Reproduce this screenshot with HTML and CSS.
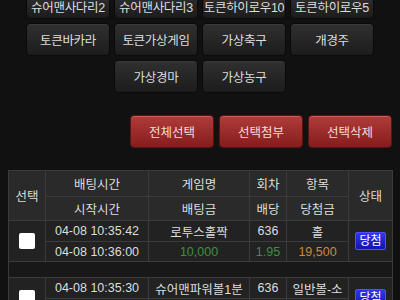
FILE: index.html
```html
<html lang="ko">

<head>
  <meta charset="UTF-8">
  <meta name="viewport" content="width=device-width, initial-scale=1.0">
  <title>betting history</title>
  <link rel="stylesheet" href="styles.css">
</head>

<body>
  <div class="page">
    <div class="games">
      <button class="game first">슈어맨사다리2</button>
      <button class="game first">슈어맨사다리3</button>
      <button class="game first">토큰하이로우10</button>
      <button class="game first">토큰하이로우5</button>
      <button class="game">토큰바카라</button>
      <button class="game">토큰가상게임</button>
      <button class="game">가상축구</button>
      <button class="game">개경주</button>
      <button class="game">가상경마</button>
      <button class="game">가상농구</button>
    </div>

    <div class="actions">
      <button class="action">전체선택</button>
      <button class="action">선택첨부</button>
      <button class="action">선택삭제</button>
    </div>

    <table class="bets">
      <colgroup>
        <col style="width: 37px">
        <col style="width: 103px">
        <col style="width: 101px">
        <col style="width: 37px">
        <col style="width: 62px">
        <col style="width: 44px">
      </colgroup>
      <thead>
        <tr class="head-top">
          <th rowspan="2">선택</th>
          <th>배팅시간</th>
          <th>게임명</th>
          <th>회차</th>
          <th>항목</th>
          <th rowspan="2">상태</th>
        </tr>
        <tr class="head-bottom">
          <th>시작시간</th>
          <th>배팅금</th>
          <th>배당</th>
          <th>당첨금</th>
        </tr>
      </thead>
      <tbody>
        <tr class="row-top">
          <td rowspan="2"><span class="check"></span></td>
          <td>04-08 10:35:42</td>
          <td>로투스홀짝</td>
          <td>636</td>
          <td>홀</td>
          <td rowspan="2"><span class="badge">당첨</span></td>
        </tr>
        <tr class="row-bottom">
          <td>04-08 10:36:00</td>
          <td class="green">10,000</td>
          <td class="green">1.95</td>
          <td class="orange">19,500</td>
        </tr>
        <tr class="spacer">
          <td colspan="6"></td>
        </tr>
        <tr class="row-top">
          <td rowspan="2"><span class="check"></span></td>
          <td>04-08 10:35:30</td>
          <td>슈어맨파워볼1분</td>
          <td>636</td>
          <td>일반볼-소</td>
          <td rowspan="2"><span class="badge">당첨</span></td>
        </tr>
        <tr class="row-bottom">
          <td>04-08 10:36:00</td>
          <td class="green">10,000</td>
          <td class="green">1.95</td>
          <td class="orange">19,500</td>
        </tr>
      </tbody>
    </table>
  </div>
</body>

</html>
```

FILE: styles.css
```css
body {
  margin: 0;
  background: #111;
  font-family: "Liberation Sans", "Noto Sans CJK KR", sans-serif;
  font-size: 12px;
  color: #ddd;
}

.page {
  margin-top: -7px;
}

.games {
  display: flex;
  flex-wrap: wrap;
  justify-content: center;
  gap: 4px;
  width: 348px;
  margin: 0 auto;
}

.game {
  width: 84px;
  height: 33px;
  padding: 0;
  border: 1px solid #0a0a0a;
  border-radius: 4px;
  background: linear-gradient(#303030, #1c1c1c);
  box-shadow: inset 0 1px 0 #3a3a3a;
  color: #ddd;
  font: inherit;
  font-size: 12.5px;
  letter-spacing: -0.3px;
}

.game.first {
  height: 26px;
}

.actions {
  display: flex;
  justify-content: flex-end;
  gap: 5px;
  margin: 22px 8px 0 0;
}

.action {
  width: 84px;
  height: 33px;
  padding: 0;
  border: 1px solid #5a1414;
  border-radius: 4px;
  background: linear-gradient(#b03c3a, #861c1c);
  box-shadow: inset 0 1px 0 #c85a58;
  color: #f2dede;
  font: inherit;
  font-size: 12.5px;
}

.bets {
  margin: 22px 8px 0 8px;
  width: 384px;
  table-layout: fixed;
  border-collapse: collapse;
}

.bets th,
.bets td {
  border: 1px solid #3b3b3b;
  padding: 0;
  text-align: center;
  white-space: nowrap;
  overflow: hidden;
}

.bets th {
  background: #2a2a2a;
  font-weight: normal;
  color: #ddd;
  font-size: 12.5px;
}

.head-top th {
  height: 26px;
}

.head-bottom th {
  height: 24px;
}

.bets td {
  background: #222;
  color: #ddd;
  font-size: 12.5px;
}

.row-top td {
  height: 21px;
}

.row-bottom td {
  height: 20px;
}

.spacer td {
  height: 16px;
  background: #181818;
  border-top: 1px solid #3b3b3b;
  border-bottom: 1px solid #3b3b3b;
}

.green {
  color: #3f8f3f !important;
}

.orange {
  color: #c98a3e !important;
}

.check {
  display: inline-block;
  width: 16px;
  height: 16px;
  border-radius: 2px;
  background: #fff;
  vertical-align: middle;
}

.badge {
  display: inline-block;
  width: 29px;
  height: 16px;
  line-height: 16px;
  border: 1px solid #5050ff;
  border-radius: 2px;
  background: linear-gradient(#3434f0, #1414a8);
  color: #fff;
  font-size: 12px;
  vertical-align: middle;
}
```
